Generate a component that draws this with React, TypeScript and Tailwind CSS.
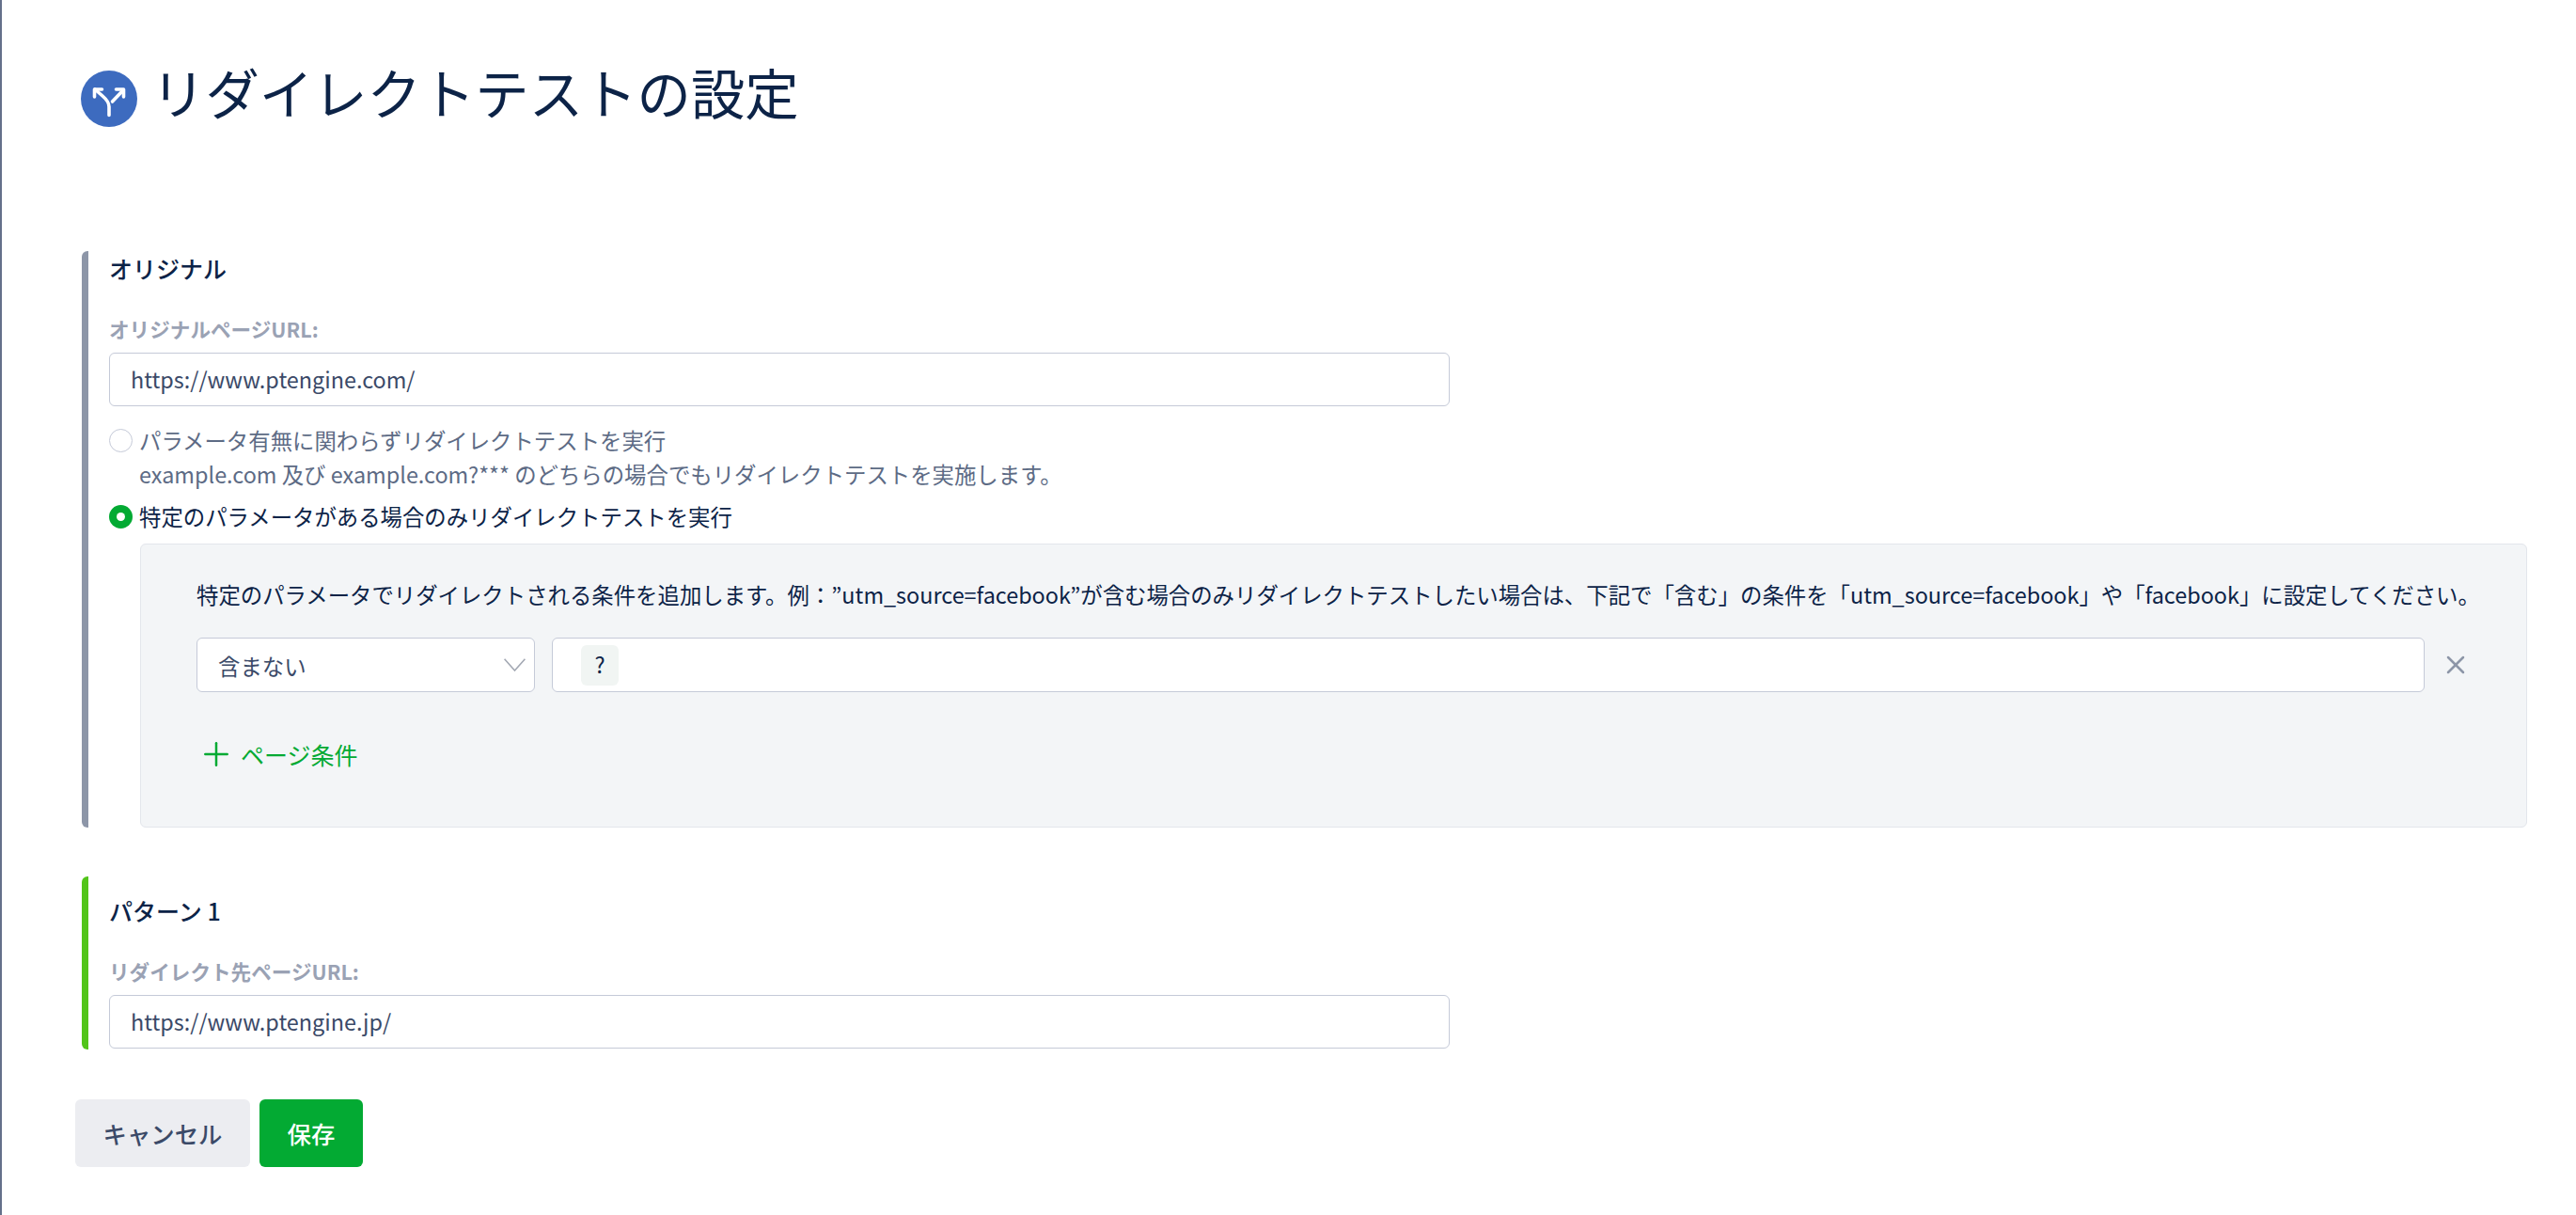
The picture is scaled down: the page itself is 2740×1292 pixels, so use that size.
import { Plus, X } from 'lucide-react';

function BranchIcon() {
  return (
    <svg width="60" height="60" viewBox="0 0 60 60" fill="none" className="shrink-0">
      <circle cx="30" cy="30" r="30" fill="#3d6bbf" />
      <g stroke="#fff" strokeWidth="3.6" strokeLinecap="round" strokeLinejoin="round">
        <path d="M30 47.5V38.5C30 33.5 26.5 30 23 27L15 20" />
        <path d="M14.5 28V20H22.5" />
        <path d="M33.5 33L45 21" />
        <path d="M37.5 20H45.5V28" />
      </g>
    </svg>
  );
}

function UrlField({ label, value }: { label: string; value: string }) {
  return (
    <div>
      <div className="mb-[10px] text-[21.6px] font-bold leading-[30px] text-[#9aa2b4]">{label}</div>
      <div className="flex h-[57px] w-[1426px] items-center rounded-[6px] border border-[#c5cad8] bg-white px-[22px] text-[23.4px] text-[#3b4a68]">
        {value}
      </div>
    </div>
  );
}

export default function App() {
  return (
    <div className="relative h-[1292px] w-[2740px] overflow-hidden border-l-2 border-[#64708a] bg-white pl-[78px] text-[#0c2347] [font-family:'Noto_Sans_CJK_JP','Noto_Sans',sans-serif]">
      {/* bits of the window behind, showing at the left edge */}
      <div className="absolute left-[-2px] top-[37px] h-[2px] w-[2px] bg-[#1f6f5c]" />
      <div className="absolute left-[-2px] top-[45px] h-[4px] w-[2px] bg-[#1f6f5c]" />
      <div className="absolute left-[-2px] top-[80px] h-[7px] w-[2px] bg-[#0f6e50]" />

      {/* Header */}
      <div className="flex h-[267px] items-start gap-[15px] pl-[6px] pt-[75px]">
        <BranchIcon />
        <h1 className="-mt-[18px] text-[57.4px] font-normal leading-[80px]">リダイレクトテストの設定</h1>
      </div>

      {/* Original */}
      <div className="ml-[7px] h-[613px] rounded-l-[6px] border-l-[7px] border-[#8d96a8] pl-[22px]">
        <div className="text-[25px] font-medium leading-[36px]">オリジナル</div>
        <div className="mt-[32px]">
          <UrlField label="オリジナルページURL:" value="https://www.ptengine.com/" />
        </div>

        <div className="mt-[23px] flex items-center gap-[7px] text-[23.4px] leading-[26px] text-[#5d6b85]">
          <span className="h-[25px] w-[25px] rounded-full border border-[#c5cad8] bg-white" />
          <span>パラメータ有無に関わらずリダイレクトテストを実行</span>
        </div>
        <div className="mt-[10px] pl-[32px] text-[23.4px] leading-[26px] text-[#5d6b85]">
          example.com 及び example.com?*** のどちらの場合でもリダイレクトテストを実施します。
        </div>
        <div className="mt-[19px] flex items-center gap-[7px] text-[23.4px] leading-[26px]">
          <span className="flex h-[25px] w-[25px] items-center justify-center rounded-full bg-[#03aa33]">
            <span className="h-[9px] w-[9px] rounded-full bg-white" />
          </span>
          <span>特定のパラメータがある場合のみリダイレクトテストを実行</span>
        </div>

        {/* Condition panel */}
        <div className="ml-[33px] mt-[16px] h-[302px] w-[2539px] rounded-[6px] border border-[#e3e6ec] bg-[#f3f5f7] pl-[59px] pt-[37px]">
          <div className="whitespace-nowrap text-[23.4px] leading-[32px]">
            特定のパラメータでリダイレクトされる条件を追加します。例：”utm_source=facebook”が含む場合のみリダイレクトテストしたい場合は、下記で「含む」の条件を「utm_source=facebook」や「facebook」に設定してください。
          </div>
          <div className="mt-[30px] flex items-center gap-[18px]">
            <div className="flex h-[58px] w-[360px] items-center justify-between rounded-[6px] border border-[#c5cad8] bg-white pl-[22px] pr-[9px] text-[23.4px] text-[#3b4a68]">
              <span className="pt-[3px]">含まない</span>
              <svg width="23" height="14" viewBox="0 0 23 14" fill="none" stroke="#a3a8b3" strokeWidth="1.6">
                <path d="M0.6 0.8L11.5 13L22.4 0.8" />
              </svg>
            </div>
            <div className="flex h-[58px] w-[1992px] items-center rounded-[6px] border border-[#c5cad8] bg-white pl-[30px]">
              <span className="flex h-[43px] w-[40px] items-center justify-center rounded-[6px] bg-[#f1f5f3] text-[23.4px]">?</span>
            </div>
            <X size={32} strokeWidth={1.9} className="-ml-[1px] text-[#8d96a8]" />
          </div>
          <div className="mt-[46px] flex items-center gap-[6px] pl-px text-[25px] leading-[36px] text-[#03aa33]">
            <Plus size={40} strokeWidth={1.5} />
            <span>ページ条件</span>
          </div>
        </div>
      </div>

      {/* Pattern 1 */}
      <div className="ml-[7px] mt-[52px] h-[184px] rounded-l-[6px] border-l-[7px] border-[#52c41a] pl-[22px]">
        <div className="pt-[18px] text-[25px] font-medium leading-[36px]">パターン 1</div>
        <div className="mt-[32px]">
          <UrlField label="リダイレクト先ページURL:" value="https://www.ptengine.jp/" />
        </div>
      </div>

      {/* Actions */}
      <div className="mt-[53px] flex gap-[10px]">
        <button className="h-[72px] w-[186px] rounded-[6px] bg-[#ecedf1] text-[25.4px] font-medium text-[#3b4a68]">キャンセル</button>
        <button className="h-[72px] w-[110px] rounded-[6px] bg-[#03aa33] text-[25.4px] font-medium text-white">保存</button>
      </div>
    </div>
  );
}
